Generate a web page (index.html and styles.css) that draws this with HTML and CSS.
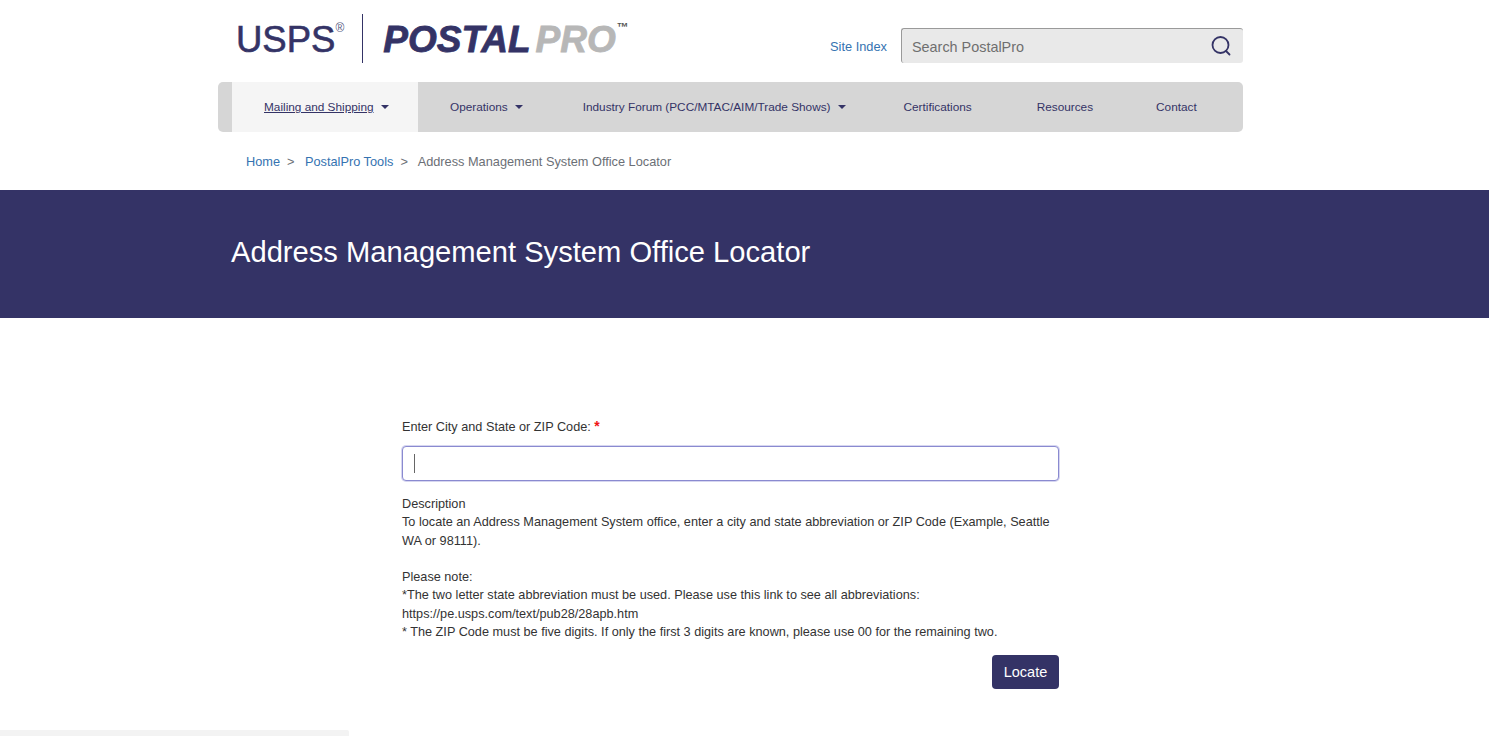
FILE: index.html
```html
<!DOCTYPE html>
<html lang="en">
<head>
    <meta charset="UTF-8">
    <link rel="stylesheet" href="styles.css">
    <title>Address Management System Office Locator — PostalPro</title>
</head>
<body>
    <!-- Header -->
    <header class="top">
        <div class="logo">
            <span class="logo-usps">USPS<sup class="logo-reg">®</sup></span>
            <span class="logo-rule"></span>
            <span class="logo-postal">POSTAL</span><span class="logo-pro">PRO</span><sup class="logo-tm">™</sup>
        </div>
        <div class="top-tools">
            <a href="#" class="site-index">Site Index</a>
            <div class="search">
                <span class="search-text">Search PostalPro</span>
                <svg class="search-icon" width="22" height="22" viewBox="0 0 22 22" fill="none" stroke="#343366" stroke-width="1.8" stroke-linecap="round">
                    <circle cx="10.5" cy="10" r="8"/>
                    <path d="M16 16l3.5 3.5"/>
                </svg>
            </div>
        </div>
    </header>

    <!-- Navigation -->
    <nav class="menu">
        <a href="#" class="menu-item menu-mail current"><span class="menu-label">Mailing and Shipping</span><i class="caret"></i></a>
        <a href="#" class="menu-item menu-ops">Operations<i class="caret"></i></a>
        <a href="#" class="menu-item menu-forum">Industry Forum (PCC/MTAC/AIM/Trade Shows)<i class="caret"></i></a>
        <a href="#" class="menu-item menu-cert">Certifications</a>
        <a href="#" class="menu-item menu-res">Resources</a>
        <a href="#" class="menu-item menu-contact">Contact</a>
    </nav>

    <div class="crumbs">
        <a href="#">Home</a><span class="crumb-sep">&gt;</span>
        <a href="#">PostalPro Tools</a><span class="crumb-sep">&gt;</span>
        <span class="crumb-current">Address Management System Office Locator</span>
    </div>

    <div class="banner">
        <h1>Address Management System Office Locator</h1>
    </div>

    <!-- Form -->
    <form class="locator">
        <label class="locator-label" for="city">Enter City and State or ZIP Code: <span class="req">*</span></label>
        <div class="locator-input" id="city"><span class="cursor"></span></div>
        <div class="locator-desc">
            Description<br>
            To locate an Address Management System office, enter a city and state abbreviation or ZIP Code (Example, Seattle WA or 98111).<br>
            <br>
            Please note:<br>
            *The two letter state abbreviation must be used. Please use this link to see all abbreviations:<br>
            https://pe.usps.com/text/pub28/28apb.htm<br>
            * The ZIP Code must be five digits. If only the first 3 digits are known, please use 00 for the remaining two.
        </div>
        <div class="locator-actions">
            <button type="button" class="locate-btn">Locate</button>
        </div>
    </form>

    <div class="bottom-strip"></div>
</body>
</html>
```

FILE: styles.css
```css
html, body {
    height: 736px;
    overflow: hidden;
}

body {
    margin: 0;
    background: #fff;
    font-family: 'Liberation Sans', Arial, sans-serif;
    color: #333;
    font-size: 12.7px;
}

a {
    text-decoration: none;
}

.top {
    width: 1025px;
    height: 82px;
    margin-left: 218px;
    display: flex;
    justify-content: space-between;
}

.logo {
    display: flex;
    align-items: flex-start;
    padding: 14px 0 0 18px;
    color: #343366;
}
.logo-usps {
    font-size: 36.5px;
    line-height: 51px;
    display: flex;
    -webkit-text-stroke: 0.6px #343366;
}
.logo-reg {
    font-size: 12px;
    line-height: 12px;
    margin: 8px 0 0 0;
    color: #555a80;
    -webkit-text-stroke: 0;
}
.logo-rule {
    width: 1px;
    height: 49px;
    margin: 0 20px 0 18px;
    background: #343366;
}
.logo-postal, .logo-pro {
    font-size: 37px;
    line-height: 51px;
    font-weight: bold;
    font-style: italic;
    -webkit-text-stroke: 0.8px #343366;
}
.logo-pro {
    color: #b7b7b7;
    margin-left: 5px;
    -webkit-text-stroke: 0.8px #b7b7b7;
}
.logo-tm {
    font-size: 12px;
    line-height: 10px;
    margin: 8px 0 0 1px;
    color: #555;
    font-weight: bold;
}

.top-tools {
    display: flex;
    align-items: center;
    gap: 14px;
    margin-top: 28px;
    height: 35px;
}
.site-index {
    color: #3573b1;
    font-size: 12.8px;
    padding-top: 1px;
}
.search {
    width: 342px;
    height: 35px;
    box-sizing: border-box;
    display: flex;
    align-items: center;
    justify-content: space-between;
    padding: 0 11px 0 10px;
    background: #e9e9e9;
    border-top: 1px solid #9a9a9a;
    border-left: 1px solid #9a9a9a;
    border-radius: 3px;
}
.search-text {
    color: #6f6f6f;
    font-size: 14.4px;
    padding-top: 1px;
}

.menu {
    width: 1025px;
    height: 50px;
    margin-left: 218px;
    box-sizing: border-box;
    padding-left: 14px;
    display: flex;
    background: #d6d6d6;
    border-radius: 5px;
}
.menu-item {
    display: flex;
    align-items: center;
    color: #343366;
    font-size: 11.8px;
    white-space: nowrap;
}
.menu-mail {
    width: 186px;
    padding-left: 32px;
    box-sizing: border-box;
}
.menu-ops { margin-left: 32px; }
.menu-forum { margin-left: 60px; }
.menu-cert { margin-left: 58px; }
.menu-res { margin-left: 65px; }
.menu-contact { margin-left: 63px; }
.current {
    background: #f5f5f5;
}
.menu-label {
    text-decoration: underline;
}
.caret {
    width: 0;
    height: 0;
    margin-left: 7px;
    border-left: 4px solid transparent;
    border-right: 4px solid transparent;
    border-top: 4px solid #343366;
}

.crumbs {
    height: 58px;
    box-sizing: border-box;
    padding: 22px 0 0 246px;
    font-size: 12.75px;
    line-height: 15px;
    color: #6b6f76;
}
.crumbs a {
    color: #3573b1;
}
.crumb-sep {
    margin: 0 7px;
    color: #6b6f76;
}

.banner {
    height: 128px;
    box-sizing: border-box;
    padding: 46px 0 0 231px;
    background: #343366;
}
.banner h1 {
    margin: 0;
    color: #fff;
    font-size: 29.15px;
    line-height: 32px;
    font-weight: normal;
}

.locator {
    width: 657px;
    margin: 100px 0 0 402px;
}
.locator-label {
    display: block;
    line-height: 16px;
}
.req {
    color: #f01515;
    font-size: 14px;
    font-weight: bold;
}
.locator-input {
    height: 35px;
    margin-top: 11px;
    box-sizing: border-box;
    padding: 7px 11px;
    border: 1px solid #8a8ad0;
    border-radius: 4px;
    box-shadow: 0 0 0 1px #d6d6f0;
    background: #fff;
}
.cursor {
    display: block;
    width: 1px;
    height: 19px;
    background: #666;
}
.locator-desc {
    margin-top: 14px;
    line-height: 18.3px;
}
.locator-actions {
    display: flex;
    justify-content: flex-end;
    margin-top: 14px;
}
.locate-btn {
    width: 67px;
    height: 34px;
    padding: 0;
    border: none;
    border-radius: 4px;
    background: #343366;
    color: #fff;
    font-family: inherit;
    font-size: 14.5px;
}

.bottom-strip {
    width: 349px;
    height: 30px;
    margin-top: 41px;
    background: #f3f3f3;
    border-top-right-radius: 2px;
}
```
